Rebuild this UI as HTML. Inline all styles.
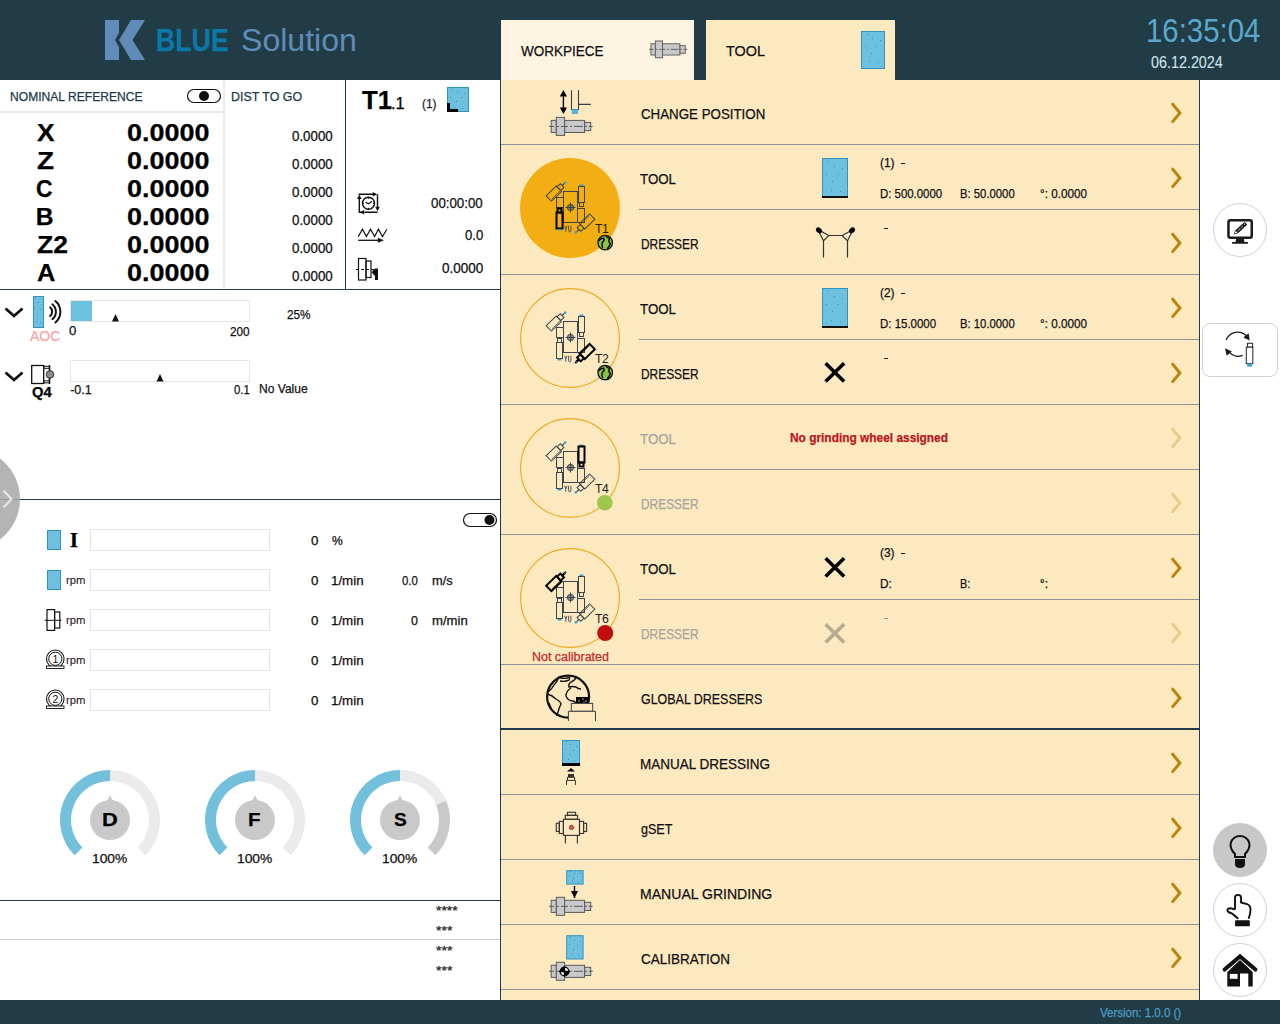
<!DOCTYPE html><html><head><meta charset="utf-8"><style>
html,body{margin:0;padding:0;width:1280px;height:1024px;overflow:hidden;background:#fff;}
body{position:relative;font-family:"Liberation Sans",sans-serif;}
.t{position:absolute;white-space:nowrap;line-height:normal;transform-origin:0 0;-webkit-text-stroke:0.25px currentColor;}
.b{position:absolute;}
.s{position:absolute;overflow:visible;}
</style></head><body>
<div class="b" style="left:0px;top:0px;width:1280px;height:80px;background:#213c47;"></div>
<svg class="s" style="left:100px;top:15px;" width="50" height="50" viewBox="0 0 50 50"><path fill="#5f8cb8" d="M5 5 H19 V18 L15 25 L19 32 V45 H5 Z"/><path fill="#5f8cb8" d="M31 5 H45 L32.5 25 L45 45 H31 L19 25 Z"/></svg>
<div class="t" style="left:156.26px;top:23.46px;font-size:30.43px;font-weight:700;color:#0a79a8;transform:scaleX(0.8779);">BLUE</div>
<div class="t" style="left:240.56px;top:22.93px;font-size:31.01px;font-weight:400;color:#5f8cb8;transform:scaleX(1.0349);-webkit-text-stroke:0;">Solution</div>
<div class="b" style="left:501px;top:20px;width:193px;height:60px;background:#fdf4e2;"></div>
<div class="b" style="left:706px;top:20px;width:189px;height:65px;background:#fde9c0;"></div>
<div class="t" style="left:520.93px;top:42.19px;font-size:14.93px;font-weight:400;color:#111;transform:scaleX(0.9057);">WORKPIECE</div>
<div class="t" style="left:725.71px;top:42.19px;font-size:14.93px;font-weight:400;color:#111;transform:scaleX(0.9664);">TOOL</div>
<svg class="s" style="left:640px;top:30px;" width="60" height="40" viewBox="0 0 60 40"><g transform="translate(9 11) scale(0.87 0.93)"><g stroke="#5a5a5a" stroke-width="1" fill="#c9c9c9"><rect x="2.2" y="3" width="5.1" height="12.1"/><rect x="15.6" y="3" width="20" height="12.1"/><rect x="35.6" y="5" width="6.1" height="8.2"/><rect x="7.3" y="0" width="8.3" height="18"/><path d="M0 9H5 M8 9H10 M12 9H19 M21 9H23 M25 9H34 M36 9H38 M40 9H43.7" fill="none" stroke-width="1"/></g></g></svg>
<svg class="s" style="left:850px;top:25px;" width="40" height="50" viewBox="0 0 40 50"><rect x="11.5" y="6.5" width="23" height="37" fill="#6ec1de" stroke="#2f95c0" stroke-width="1"/><rect x="17" y="9" width="1" height="1" fill="#2f8fbd"/><rect x="22" y="13" width="1" height="1" fill="#2f8fbd"/><rect x="30" y="15" width="1" height="1" fill="#2f8fbd"/><rect x="15" y="21" width="1" height="1" fill="#2f8fbd"/><rect x="26" y="21" width="1" height="1" fill="#2f8fbd"/><rect x="21" y="28" width="1" height="1" fill="#2f8fbd"/><rect x="19" y="36" width="1" height="1" fill="#2f8fbd"/><rect x="28" y="37" width="1" height="1" fill="#2f8fbd"/></svg>
<div class="t" style="left:1146.40px;top:12.62px;font-size:32.46px;font-weight:400;color:#5aa9cc;transform:scaleX(0.9050);-webkit-text-stroke:0;">16:35:04</div>
<div class="t" style="left:1151.43px;top:53.57px;font-size:15.94px;font-weight:400;color:#d0e2ea;transform:scaleX(0.8999);-webkit-text-stroke:0.1px;">06.12.2024</div>
<div class="b" style="left:0px;top:1000px;width:1280px;height:24px;background:#213c47;"></div>
<div class="t" style="left:1099.74px;top:1005.01px;font-size:12.97px;font-weight:400;color:#4d9ec4;transform:scaleX(0.8868);">Version: 1.0.0 ()</div>
<div class="b" style="left:500px;top:80px;width:1px;height:920px;background:#1f3a48;"></div>
<div class="b" style="left:0px;top:111px;width:223px;height:2px;background:#e8e8e8;"></div>
<div class="b" style="left:223px;top:80px;width:2px;height:209px;background:#ececec;"></div>
<div class="b" style="left:345px;top:80px;width:1px;height:209px;background:#1f3a48;"></div>
<div class="b" style="left:0px;top:289px;width:500px;height:1px;background:#1f3a48;"></div>
<div class="b" style="left:0px;top:499px;width:500px;height:1px;background:#1f3a48;"></div>
<div class="b" style="left:0px;top:900px;width:500px;height:1px;background:#1f3a48;"></div>
<div class="b" style="left:0px;top:939px;width:500px;height:1px;background:#cfcfcf;"></div>
<div class="t" style="left:9.83px;top:89.40px;font-size:13.04px;font-weight:400;color:#1c3949;transform:scaleX(0.9275);">NOMINAL REFERENCE</div>
<div class="t" style="left:230.51px;top:89.52px;font-size:12.46px;font-weight:400;color:#1c3949;transform:scaleX(0.9966);">DIST TO GO</div>
<svg class="s" style="left:186px;top:88px;" width="36" height="16" viewBox="0 0 36 16"><rect x="1.5" y="1.5" width="33" height="13" rx="6.5" fill="#fff" stroke="#111" stroke-width="1.2"/><circle cx="18" cy="8" r="5" fill="#111"/></svg>
<div class="t" style="left:37.14px;top:119.30px;font-size:24.64px;font-weight:700;color:#000;transform:scaleX(1.0698);">X</div>
<div class="t" style="left:126.92px;top:119.30px;font-size:24.64px;font-weight:700;color:#000;transform:scaleX(1.0951);">0.0000</div>
<div class="t" style="left:292.17px;top:129.34px;font-size:13.77px;font-weight:400;color:#111;transform:scaleX(0.9660);">0.0000</div>
<div class="t" style="left:36.56px;top:147.30px;font-size:24.64px;font-weight:700;color:#000;transform:scaleX(1.1335);">Z</div>
<div class="t" style="left:126.92px;top:147.30px;font-size:24.64px;font-weight:700;color:#000;transform:scaleX(1.0951);">0.0000</div>
<div class="t" style="left:292.17px;top:157.34px;font-size:13.77px;font-weight:400;color:#111;transform:scaleX(0.9660);">0.0000</div>
<div class="t" style="left:36.48px;top:175.30px;font-size:24.64px;font-weight:700;color:#000;transform:scaleX(0.9295);">C</div>
<div class="t" style="left:126.92px;top:175.30px;font-size:24.64px;font-weight:700;color:#000;transform:scaleX(1.0951);">0.0000</div>
<div class="t" style="left:292.17px;top:185.34px;font-size:13.77px;font-weight:400;color:#111;transform:scaleX(0.9660);">0.0000</div>
<div class="t" style="left:35.80px;top:203.30px;font-size:24.64px;font-weight:700;color:#000;">B</div>
<div class="t" style="left:126.92px;top:203.30px;font-size:24.64px;font-weight:700;color:#000;transform:scaleX(1.0951);">0.0000</div>
<div class="t" style="left:292.17px;top:213.34px;font-size:13.77px;font-weight:400;color:#111;transform:scaleX(0.9660);">0.0000</div>
<div class="t" style="left:36.61px;top:231.30px;font-size:24.64px;font-weight:700;color:#000;transform:scaleX(1.0749);">Z2</div>
<div class="t" style="left:126.92px;top:231.30px;font-size:24.64px;font-weight:700;color:#000;transform:scaleX(1.0951);">0.0000</div>
<div class="t" style="left:292.17px;top:241.34px;font-size:13.77px;font-weight:400;color:#111;transform:scaleX(0.9660);">0.0000</div>
<div class="t" style="left:36.77px;top:259.30px;font-size:24.64px;font-weight:700;color:#000;transform:scaleX(1.0299);">A</div>
<div class="t" style="left:126.92px;top:259.30px;font-size:24.64px;font-weight:700;color:#000;transform:scaleX(1.0951);">0.0000</div>
<div class="t" style="left:292.17px;top:269.34px;font-size:13.77px;font-weight:400;color:#111;transform:scaleX(0.9660);">0.0000</div>
<div class="t" style="left:361.74px;top:85.26px;font-size:26.23px;font-weight:700;color:#000;transform:scaleX(0.9783);">T1</div>
<div class="t" style="left:391.02px;top:94.57px;font-size:15.94px;font-weight:400;color:#000;transform:scaleX(1.0305);">.1</div>
<div class="t" style="left:421.79px;top:97.19px;font-size:12.50px;font-weight:400;color:#222;transform:scaleX(0.9527);">(1)</div>
<svg class="s" style="left:440px;top:80px;" width="40" height="40" viewBox="0 0 40 40"><rect x="7.5" y="7.5" width="21" height="24" fill="#6ec1de" stroke="#2f95c0" stroke-width="1"/><rect x="12" y="9" width="1" height="1" fill="#2f8fbd"/><rect x="17" y="12" width="1" height="1" fill="#2f8fbd"/><rect x="24" y="13" width="1" height="1" fill="#2f8fbd"/><rect x="10" y="17" width="1" height="1" fill="#2f8fbd"/><rect x="21" y="17" width="1" height="1" fill="#2f8fbd"/><rect x="16" y="21" width="1" height="1" fill="#2f8fbd"/><rect x="14" y="27" width="1" height="1" fill="#2f8fbd"/><rect x="22" y="28" width="1" height="1" fill="#2f8fbd"/><path d="M7 23 H10 V29 H18 V32 H7Z" fill="#000"/></svg>
<svg class="s" style="left:350px;top:185px;" width="40" height="35" viewBox="0 0 40 35"><g fill="none" stroke="#111" stroke-width="1.4">
<path d="M9.3 14 V27.3 H14 M23 9.2 H9.3 V10 M27.5 9.2 V22.5 M27.5 27.3 H14.5"/>
<circle cx="18.5" cy="18.3" r="6"/><path d="M15.6 17.2 L18.5 18.8 L22 16.3" stroke-width="1.2"/>
<path d="M18.5 12.3 V13.8 M18.5 22.8 V24.3 M12.5 18.3 H14 M23 18.3 H24.5" stroke-width="1"/></g>
<path d="M27.2 9.2 L22.8 6.9 V11.5Z M27.5 26.2 L25.2 21.8 H29.8Z M9.8 27.3 L14.2 25 V29.6Z M9.3 9.6 L7 14 H11.6Z" fill="#111"/></svg>
<div class="t" style="left:431.47px;top:194.92px;font-size:14.35px;font-weight:400;color:#111;transform:scaleX(0.9262);">00:00:00</div>
<svg class="s" style="left:350px;top:222px;" width="45" height="25" viewBox="0 0 45 25"><path d="M8.2 14.6 L12.5 7.3 L16.4 14.6 L20.5 7.3 L24.6 14.6 L28.4 7.3 L32.5 14.6 L36.9 7.3" fill="none" stroke="#111" stroke-width="1.2"/><path d="M8.2 18.3 H29" stroke="#111" stroke-width="1.3"/><path d="M33.9 18.3 L27.8 15.8 V20.8Z" fill="#111"/></svg>
<div class="t" style="left:464.98px;top:228.04px;font-size:13.77px;font-weight:400;color:#111;transform:scaleX(0.9500);">0.0</div>
<svg class="s" style="left:350px;top:255px;" width="35" height="30" viewBox="0 0 35 30"><rect x="8.5" y="3.5" width="7.5" height="21.5" fill="none" stroke="#111" stroke-width="1.2"/><rect x="16" y="6" width="5" height="16.5" fill="none" stroke="#111" stroke-width="1.2"/><path d="M6 14.5 H26" stroke="#111" stroke-width="1" stroke-dasharray="3 2"/><path d="M21.6 17.3 L25 13.6 V13.4 H28 V25 H25 V21Z" fill="#111"/></svg>
<div class="t" style="left:441.96px;top:261.04px;font-size:13.77px;font-weight:400;color:#111;transform:scaleX(0.9782);">0.0000</div>
<svg class="s" style="left:0px;top:300px;" width="30" height="30" viewBox="0 0 30 30"><path d="M5.5 8.5 L14 16 L22.5 8.5" fill="none" stroke="#111" stroke-width="2.8"/></svg>
<svg class="s" style="left:30px;top:294px;" width="35" height="36" viewBox="0 0 35 36"><rect x="3.5" y="2.5" width="10" height="31" fill="#6ec1de" stroke="#2f95c0" stroke-width="1"/><rect x="5" y="4" width="1" height="1" fill="#2f8fbd"/><rect x="8" y="8" width="1" height="1" fill="#2f8fbd"/><rect x="11" y="10" width="1" height="1" fill="#2f8fbd"/><rect x="4" y="14" width="1" height="1" fill="#2f8fbd"/><rect x="10" y="15" width="1" height="1" fill="#2f8fbd"/><rect x="7" y="20" width="1" height="1" fill="#2f8fbd"/><rect x="6" y="27" width="1" height="1" fill="#2f8fbd"/><rect x="10" y="28" width="1" height="1" fill="#2f8fbd"/><g fill="none" stroke="#111" stroke-width="2" stroke-linecap="round"><path d="M20.1 13.3 A5.8 5.8 0 0 1 20.1 22.1"/><path d="M22.5 10.4 A9.5 9.5 0 0 1 22.5 25"/><path d="M25.4 7 A14 14 0 0 1 25.4 28.4"/></g></svg>
<div class="t" style="left:30.30px;top:328.35px;font-size:14.64px;font-weight:400;color:#f4a2a2;transform:scaleX(0.9526);">AOC</div>
<div class="b" style="left:70px;top:300px;width:180px;height:22px;background:#fff;box-sizing:border-box;border:1px solid #e6e6e6;"></div>
<div class="b" style="left:71px;top:301px;width:20.5px;height:20px;background:#6ec1de;"></div>
<svg class="s" style="left:110px;top:312px;" width="12" height="10" viewBox="0 0 12 10"><path d="M5.5 2 L9 9.5 H2Z" fill="#111"/></svg>
<div class="t" style="left:69.47px;top:323.94px;font-size:11.88px;font-weight:400;color:#111;transform:scaleX(1.1044);">0</div>
<div class="t" style="left:230.21px;top:323.76px;font-size:12.75px;font-weight:400;color:#111;transform:scaleX(0.9230);">200</div>
<div class="t" style="left:286.81px;top:307.23px;font-size:12.90px;font-weight:400;color:#111;transform:scaleX(0.9150);">25%</div>
<svg class="s" style="left:0px;top:364px;" width="30" height="30" viewBox="0 0 30 30"><path d="M5.5 8.5 L14 16 L22.5 8.5" fill="none" stroke="#111" stroke-width="2.8"/></svg>
<svg class="s" style="left:28px;top:362px;" width="30" height="26" viewBox="0 0 30 26"><rect x="3.7" y="3.5" width="12" height="18" fill="#fff" stroke="#111" stroke-width="1.3"/><rect x="15.7" y="4.3" width="5.8" height="2" fill="none" stroke="#111" stroke-width="1"/><rect x="15.7" y="18.8" width="5.8" height="2" fill="none" stroke="#111" stroke-width="1"/><path d="M21.5 3 V22" stroke="#111" stroke-width="1.6"/><circle cx="22" cy="12.5" r="3.8" fill="#8c8c8c" stroke="#111" stroke-width="0.8"/></svg>
<div class="t" style="left:32.01px;top:384.74px;font-size:13.77px;font-weight:700;color:#000;transform:scaleX(1.0698);">Q4</div>
<div class="b" style="left:70px;top:360px;width:180px;height:22px;background:#fff;box-sizing:border-box;border:1px solid #e6e6e6;"></div>
<svg class="s" style="left:154px;top:372px;" width="12" height="10" viewBox="0 0 12 10"><path d="M6 2 L9.5 9.5 H2.5Z" fill="#111"/></svg>
<div class="t" style="left:70.14px;top:383.09px;font-size:12.50px;font-weight:400;color:#111;">-0.1</div>
<div class="t" style="left:234.15px;top:382.07px;font-size:13.62px;font-weight:400;color:#111;transform:scaleX(0.8325);">0.1</div>
<div class="t" style="left:259.04px;top:380.63px;font-size:12.90px;font-weight:400;color:#111;transform:scaleX(0.9347);">No Value</div>
<div class="b" style="left:-82px;top:448px;width:102px;height:102px;border-radius:50%;background:rgba(170,170,170,0.88);"></div>
<svg class="s" style="left:0px;top:488px;" width="16" height="24" viewBox="0 0 16 24"><path d="M3.5 2.5 L11.5 11 L3.5 19.5" fill="none" stroke="#e6e6e6" stroke-width="2.2"/></svg>
<svg class="s" style="left:460px;top:510px;" width="40" height="20" viewBox="0 0 40 20"><rect x="3.5" y="3.5" width="33" height="13" rx="6.5" fill="#fff" stroke="#111" stroke-width="1.2"/><circle cx="29.5" cy="10" r="5" fill="#111"/></svg>
<div class="b" style="left:90px;top:529px;width:180px;height:22px;background:#fff;box-sizing:border-box;border:1px solid #e4e4e4;"></div>
<div class="t" style="left:311.27px;top:534.04px;font-size:11.88px;font-weight:400;color:#111;transform:scaleX(1.1220);">0</div>
<div class="b" style="left:90px;top:569px;width:180px;height:22px;background:#fff;box-sizing:border-box;border:1px solid #e4e4e4;"></div>
<div class="t" style="left:311.27px;top:574.04px;font-size:11.88px;font-weight:400;color:#111;transform:scaleX(1.1220);">0</div>
<div class="b" style="left:90px;top:609px;width:180px;height:22px;background:#fff;box-sizing:border-box;border:1px solid #e4e4e4;"></div>
<div class="t" style="left:311.27px;top:614.04px;font-size:11.88px;font-weight:400;color:#111;transform:scaleX(1.1220);">0</div>
<div class="b" style="left:90px;top:649px;width:180px;height:22px;background:#fff;box-sizing:border-box;border:1px solid #e4e4e4;"></div>
<div class="t" style="left:311.27px;top:654.04px;font-size:11.88px;font-weight:400;color:#111;transform:scaleX(1.1220);">0</div>
<div class="b" style="left:90px;top:689px;width:180px;height:22px;background:#fff;box-sizing:border-box;border:1px solid #e4e4e4;"></div>
<div class="t" style="left:311.27px;top:694.04px;font-size:11.88px;font-weight:400;color:#111;transform:scaleX(1.1220);">0</div>
<svg class="s" style="left:40px;top:525px;" width="25" height="30" viewBox="0 0 25 30"><rect x="7.5" y="5.5" width="13" height="19" fill="#6ec1de" stroke="#2f95c0" stroke-width="1"/></svg>
<svg class="s" style="left:40px;top:565px;" width="25" height="30" viewBox="0 0 25 30"><rect x="7.5" y="5.5" width="13" height="19" fill="#6ec1de" stroke="#2f95c0" stroke-width="1"/></svg>
<div class="t" style="left:69.80px;top:528.44px;font-size:21.50px;font-weight:700;color:#000;font-family:'Liberation Serif',serif;">I</div>
<div class="t" style="left:66.17px;top:573.84px;font-size:11.00px;font-weight:400;color:#222;transform:scaleX(1.0259);-webkit-text-stroke:0.1px;">rpm</div>
<div class="t" style="left:66.17px;top:613.84px;font-size:11.00px;font-weight:400;color:#222;transform:scaleX(1.0259);-webkit-text-stroke:0.1px;">rpm</div>
<div class="t" style="left:66.17px;top:653.84px;font-size:11.00px;font-weight:400;color:#222;transform:scaleX(1.0259);-webkit-text-stroke:0.1px;">rpm</div>
<div class="t" style="left:66.17px;top:693.84px;font-size:11.00px;font-weight:400;color:#222;transform:scaleX(1.0259);-webkit-text-stroke:0.1px;">rpm</div>
<svg class="s" style="left:40px;top:605px;" width="25" height="30" viewBox="0 0 25 30"><rect x="7" y="4.6" width="7.6" height="20.8" fill="none" stroke="#111" stroke-width="1.2"/><rect x="14.6" y="7" width="5.2" height="16" fill="none" stroke="#111" stroke-width="1.2"/><path d="M4.7 15.3 H21.5" stroke="#111" stroke-width="1"/></svg>
<svg class="s" style="left:40px;top:645px;" width="26" height="28" viewBox="0 0 26 28"><circle cx="15.3" cy="13.8" r="8.8" fill="none" stroke="#111" stroke-width="1.1"/><circle cx="15.3" cy="13.8" r="6.6" fill="none" stroke="#111" stroke-width="1"/><rect x="6.5" y="21" width="17.5" height="2.5" fill="#fff" stroke="#111" stroke-width="0.9"/><text x="15.3" y="17.6" font-size="10.5" text-anchor="middle" font-family="Liberation Sans" fill="#111">1</text></svg>
<svg class="s" style="left:40px;top:685px;" width="26" height="28" viewBox="0 0 26 28"><circle cx="15.3" cy="13.8" r="8.8" fill="none" stroke="#111" stroke-width="1.1"/><circle cx="15.3" cy="13.8" r="6.6" fill="none" stroke="#111" stroke-width="1"/><rect x="6.5" y="21" width="17.5" height="2.5" fill="#fff" stroke="#111" stroke-width="0.9"/><text x="15.3" y="17.6" font-size="10.5" text-anchor="middle" font-family="Liberation Sans" fill="#111">2</text></svg>
<div class="t" style="left:331.58px;top:533.94px;font-size:11.88px;font-weight:400;color:#111;transform:scaleX(1.0159);">%</div>
<div class="t" style="left:331.00px;top:573.75px;font-size:12.32px;font-weight:400;color:#111;transform:scaleX(1.0812);">1/min</div>
<div class="t" style="left:331.00px;top:613.75px;font-size:12.32px;font-weight:400;color:#111;transform:scaleX(1.0812);">1/min</div>
<div class="t" style="left:331.00px;top:653.75px;font-size:12.32px;font-weight:400;color:#111;transform:scaleX(1.0812);">1/min</div>
<div class="t" style="left:331.00px;top:693.75px;font-size:12.32px;font-weight:400;color:#111;transform:scaleX(1.0812);">1/min</div>
<div class="t" style="left:402.04px;top:573.75px;font-size:12.32px;font-weight:400;color:#111;transform:scaleX(0.9260);">0.0</div>
<div class="t" style="left:431.66px;top:573.59px;font-size:12.50px;font-weight:400;color:#111;transform:scaleX(1.0278);">m/s</div>
<div class="t" style="left:411.00px;top:613.85px;font-size:12.32px;font-weight:400;color:#111;transform:scaleX(1.0147);">0</div>
<div class="t" style="left:431.65px;top:613.69px;font-size:12.50px;font-weight:400;color:#111;transform:scaleX(1.0502);">m/min</div>
<svg class="s" style="left:60px;top:770px;" width="100" height="100" viewBox="0 0 100 100"><path d="M18.53 81.47 A44.5 44.5 0 0 1 50.00 5.50" fill="none" stroke="#72c0dc" stroke-width="11"/><path d="M50.00 5.50 A44.5 44.5 0 0 1 81.47 81.47" fill="none" stroke="#ebebeb" stroke-width="11"/><circle cx="50" cy="50" r="20" fill="#c9c9c9"/><path d="M45 32 Q49 29 50 25 Q51 29 55 32Z" fill="#c9c9c9"/></svg>
<div class="t" style="left:101.88px;top:809.36px;font-size:19.28px;font-weight:700;color:#000;transform:scaleX(1.1304);">D</div>
<div class="t" style="left:91.97px;top:850.66px;font-size:13.19px;font-weight:400;color:#111;transform:scaleX(1.0461);">100%</div>
<svg class="s" style="left:205px;top:770px;" width="100" height="100" viewBox="0 0 100 100"><path d="M18.53 81.47 A44.5 44.5 0 0 1 50.00 5.50" fill="none" stroke="#72c0dc" stroke-width="11"/><path d="M50.00 5.50 A44.5 44.5 0 0 1 81.47 81.47" fill="none" stroke="#ebebeb" stroke-width="11"/><circle cx="50" cy="50" r="20" fill="#c9c9c9"/><path d="M45 32 Q49 29 50 25 Q51 29 55 32Z" fill="#c9c9c9"/></svg>
<div class="t" style="left:248.41px;top:809.36px;font-size:19.28px;font-weight:700;color:#000;transform:scaleX(1.0681);">F</div>
<div class="t" style="left:236.97px;top:850.66px;font-size:13.19px;font-weight:400;color:#111;transform:scaleX(1.0461);">100%</div>
<svg class="s" style="left:350px;top:770px;" width="100" height="100" viewBox="0 0 100 100"><path d="M18.53 81.47 A44.5 44.5 0 0 1 50.00 5.50" fill="none" stroke="#72c0dc" stroke-width="11"/><path d="M50.00 5.50 A44.5 44.5 0 0 1 91.11 32.97" fill="none" stroke="#ebebeb" stroke-width="11"/><path d="M91.11 32.97 A44.5 44.5 0 0 1 81.47 81.47" fill="none" stroke="#c9c9c9" stroke-width="11"/><circle cx="50" cy="50" r="20" fill="#c9c9c9"/><path d="M45 32 Q49 29 50 25 Q51 29 55 32Z" fill="#c9c9c9"/></svg>
<div class="t" style="left:393.68px;top:809.36px;font-size:19.28px;font-weight:700;color:#000;transform:scaleX(0.9944);">S</div>
<div class="t" style="left:381.97px;top:850.66px;font-size:13.19px;font-weight:400;color:#111;transform:scaleX(1.0461);">100%</div>
<div class="t" style="left:435.99px;top:903.24px;font-size:13.00px;font-weight:400;color:#222;transform:scaleX(1.0744);">****</div>
<div class="t" style="left:435.99px;top:923.24px;font-size:13.00px;font-weight:400;color:#222;transform:scaleX(1.0796);">***</div>
<div class="t" style="left:435.99px;top:943.24px;font-size:13.00px;font-weight:400;color:#222;transform:scaleX(1.0796);">***</div>
<div class="t" style="left:435.99px;top:963.24px;font-size:13.00px;font-weight:400;color:#222;transform:scaleX(1.0796);">***</div>
<div class="b" style="left:501px;top:80px;width:698px;height:920px;background:#fde9c0;"></div>
<div class="b" style="left:1199px;top:80px;width:1px;height:920px;background:#1f3a48;"></div>
<div class="b" style="left:501px;top:144px;width:698px;height:1px;background:#8e9597;"></div>
<div class="b" style="left:501px;top:274px;width:698px;height:1px;background:#8e9597;"></div>
<div class="b" style="left:501px;top:404px;width:698px;height:1px;background:#8e9597;"></div>
<div class="b" style="left:501px;top:534px;width:698px;height:1px;background:#8e9597;"></div>
<div class="b" style="left:501px;top:664px;width:698px;height:1px;background:#8e9597;"></div>
<div class="b" style="left:501px;top:794px;width:698px;height:1px;background:#8e9597;"></div>
<div class="b" style="left:501px;top:859px;width:698px;height:1px;background:#8e9597;"></div>
<div class="b" style="left:501px;top:924px;width:698px;height:1px;background:#8e9597;"></div>
<div class="b" style="left:501px;top:989px;width:698px;height:1px;background:#8e9597;"></div>
<div class="b" style="left:639px;top:209px;width:560px;height:1px;background:#8e9597;"></div>
<div class="b" style="left:639px;top:339px;width:560px;height:1px;background:#8e9597;"></div>
<div class="b" style="left:639px;top:469px;width:560px;height:1px;background:#8e9597;"></div>
<div class="b" style="left:639px;top:599px;width:560px;height:1px;background:#8e9597;"></div>
<div class="b" style="left:501px;top:728px;width:698px;height:2px;background:#1f3a48;"></div>
<svg class="s" style="left:1165px;top:100px;" width="20" height="26" viewBox="0 0 20 26"><path d="M7.7 4.2 L14.9 13 L7.7 21.6" fill="none" stroke="#b8860b" stroke-width="3" stroke-linecap="round" stroke-linejoin="miter"/></svg>
<svg class="s" style="left:1165px;top:165px;" width="20" height="26" viewBox="0 0 20 26"><path d="M7.7 4.2 L14.9 13 L7.7 21.6" fill="none" stroke="#b8860b" stroke-width="3" stroke-linecap="round" stroke-linejoin="miter"/></svg>
<svg class="s" style="left:1165px;top:230px;" width="20" height="26" viewBox="0 0 20 26"><path d="M7.7 4.2 L14.9 13 L7.7 21.6" fill="none" stroke="#b8860b" stroke-width="3" stroke-linecap="round" stroke-linejoin="miter"/></svg>
<svg class="s" style="left:1165px;top:295px;" width="20" height="26" viewBox="0 0 20 26"><path d="M7.7 4.2 L14.9 13 L7.7 21.6" fill="none" stroke="#b8860b" stroke-width="3" stroke-linecap="round" stroke-linejoin="miter"/></svg>
<svg class="s" style="left:1165px;top:360px;" width="20" height="26" viewBox="0 0 20 26"><path d="M7.7 4.2 L14.9 13 L7.7 21.6" fill="none" stroke="#b8860b" stroke-width="3" stroke-linecap="round" stroke-linejoin="miter"/></svg>
<svg class="s" style="left:1165px;top:750px;" width="20" height="26" viewBox="0 0 20 26"><path d="M7.7 4.2 L14.9 13 L7.7 21.6" fill="none" stroke="#b8860b" stroke-width="3" stroke-linecap="round" stroke-linejoin="miter"/></svg>
<svg class="s" style="left:1165px;top:815px;" width="20" height="26" viewBox="0 0 20 26"><path d="M7.7 4.2 L14.9 13 L7.7 21.6" fill="none" stroke="#b8860b" stroke-width="3" stroke-linecap="round" stroke-linejoin="miter"/></svg>
<svg class="s" style="left:1165px;top:880px;" width="20" height="26" viewBox="0 0 20 26"><path d="M7.7 4.2 L14.9 13 L7.7 21.6" fill="none" stroke="#b8860b" stroke-width="3" stroke-linecap="round" stroke-linejoin="miter"/></svg>
<svg class="s" style="left:1165px;top:945px;" width="20" height="26" viewBox="0 0 20 26"><path d="M7.7 4.2 L14.9 13 L7.7 21.6" fill="none" stroke="#b8860b" stroke-width="3" stroke-linecap="round" stroke-linejoin="miter"/></svg>
<svg class="s" style="left:1165px;top:685px;" width="20" height="26" viewBox="0 0 20 26"><path d="M7.7 4.2 L14.9 13 L7.7 21.6" fill="none" stroke="#b8860b" stroke-width="3" stroke-linecap="round" stroke-linejoin="miter"/></svg>
<svg class="s" style="left:1165px;top:555px;" width="20" height="26" viewBox="0 0 20 26"><path d="M7.7 4.2 L14.9 13 L7.7 21.6" fill="none" stroke="#b8860b" stroke-width="3" stroke-linecap="round" stroke-linejoin="miter"/></svg>
<svg class="s" style="left:1165px;top:425px;" width="20" height="26" viewBox="0 0 20 26"><path d="M7.7 4.2 L14.9 13 L7.7 21.6" fill="none" stroke="#e6cc88" stroke-width="3" stroke-linecap="round" stroke-linejoin="miter"/></svg>
<svg class="s" style="left:1165px;top:490px;" width="20" height="26" viewBox="0 0 20 26"><path d="M7.7 4.2 L14.9 13 L7.7 21.6" fill="none" stroke="#e6cc88" stroke-width="3" stroke-linecap="round" stroke-linejoin="miter"/></svg>
<svg class="s" style="left:1165px;top:620px;" width="20" height="26" viewBox="0 0 20 26"><path d="M7.7 4.2 L14.9 13 L7.7 21.6" fill="none" stroke="#e6cc88" stroke-width="3" stroke-linecap="round" stroke-linejoin="miter"/></svg>
<div class="t" style="left:640.63px;top:106.05px;font-size:14.20px;font-weight:400;color:#111;transform:scaleX(0.9383);">CHANGE POSITION</div>
<div class="t" style="left:640.03px;top:170.85px;font-size:14.20px;font-weight:400;color:#111;transform:scaleX(0.9388);">TOOL</div>
<div class="t" style="left:640.75px;top:236.05px;font-size:14.20px;font-weight:400;color:#111;transform:scaleX(0.8401);">DRESSER</div>
<div class="t" style="left:640.03px;top:300.85px;font-size:14.20px;font-weight:400;color:#111;transform:scaleX(0.9388);">TOOL</div>
<div class="t" style="left:640.75px;top:366.05px;font-size:14.20px;font-weight:400;color:#111;transform:scaleX(0.8401);">DRESSER</div>
<div class="t" style="left:640.03px;top:430.85px;font-size:14.20px;font-weight:400;color:#a7a59f;transform:scaleX(0.9388);">TOOL</div>
<div class="t" style="left:640.75px;top:496.05px;font-size:14.20px;font-weight:400;color:#a7a59f;transform:scaleX(0.8401);">DRESSER</div>
<div class="t" style="left:640.03px;top:560.85px;font-size:14.20px;font-weight:400;color:#111;transform:scaleX(0.9388);">TOOL</div>
<div class="t" style="left:640.75px;top:626.05px;font-size:14.20px;font-weight:400;color:#a7a59f;transform:scaleX(0.8401);">DRESSER</div>
<div class="t" style="left:640.68px;top:690.65px;font-size:14.20px;font-weight:400;color:#111;transform:scaleX(0.8775);">GLOBAL DRESSERS</div>
<div class="t" style="left:640.22px;top:755.65px;font-size:14.20px;font-weight:400;color:#111;transform:scaleX(0.9521);">MANUAL DRESSING</div>
<div class="t" style="left:640.80px;top:820.65px;font-size:14.20px;font-weight:400;color:#111;transform:scaleX(0.8859);">gSET</div>
<div class="t" style="left:640.17px;top:885.65px;font-size:14.20px;font-weight:400;color:#111;transform:scaleX(0.9905);">MANUAL GRINDING</div>
<div class="t" style="left:640.63px;top:950.65px;font-size:14.20px;font-weight:400;color:#111;transform:scaleX(0.9504);">CALIBRATION</div>
<svg class="s" style="left:815px;top:150px;" width="40" height="55" viewBox="0 0 40 55"><rect x="7.5" y="8.5" width="25" height="39" fill="#6ec1de" stroke="#2f95c0" stroke-width="1"/><rect x="13" y="11" width="1" height="1" fill="#2f8fbd"/><rect x="19" y="16" width="1" height="1" fill="#2f8fbd"/><rect x="27" y="18" width="1" height="1" fill="#2f8fbd"/><rect x="11" y="24" width="1" height="1" fill="#2f8fbd"/><rect x="23" y="24" width="1" height="1" fill="#2f8fbd"/><rect x="17" y="31" width="1" height="1" fill="#2f8fbd"/><rect x="16" y="40" width="1" height="1" fill="#2f8fbd"/><rect x="25" y="41" width="1" height="1" fill="#2f8fbd"/><rect x="7" y="46" width="26" height="2" fill="#111"/></svg>
<div class="t" style="left:879.59px;top:155.69px;font-size:12.50px;font-weight:400;color:#111;transform:scaleX(0.9527);">(1)</div>
<div class="b" style="left:900.8px;top:163px;width:3.8px;height:1.2px;background:#111;"></div>
<div class="t" style="left:879.79px;top:186.65px;font-size:12.32px;font-weight:400;color:#111;transform:scaleX(0.9251);">D: 500.0000</div>
<div class="t" style="left:959.69px;top:186.65px;font-size:12.32px;font-weight:400;color:#111;transform:scaleX(0.9184);">B: 50.0000</div>
<div class="t" style="left:1039.90px;top:186.67px;font-size:12.30px;font-weight:400;color:#111;transform:scaleX(0.9520);">°: 0.0000</div>
<svg class="s" style="left:810px;top:222px;" width="50" height="40" viewBox="0 0 50 40"><g fill="none" stroke="#333" stroke-width="1.2"><path d="M13.5 35.5 V18.75 L18.75 13.5 H32.2 L37.5 18.75 V35.5"/><path d="M13.5 18.75 L7.8 7.4 L18.75 13.5"/><path d="M37.5 18.75 L43.2 7.4 L32.2 13.5"/></g><ellipse cx="9" cy="8.4" rx="3.3" ry="2.5" transform="rotate(40 9 8.4)" fill="#000"/><ellipse cx="42" cy="8.4" rx="3.3" ry="2.5" transform="rotate(-40 42 8.4)" fill="#000"/></svg>
<div class="b" style="left:883.8px;top:228px;width:4px;height:1.2px;background:#222;"></div>
<svg class="s" style="left:815px;top:280px;" width="40" height="55" viewBox="0 0 40 55"><rect x="7.5" y="8.5" width="25" height="39" fill="#6ec1de" stroke="#2f95c0" stroke-width="1"/><rect x="13" y="11" width="1" height="1" fill="#2f8fbd"/><rect x="19" y="16" width="1" height="1" fill="#2f8fbd"/><rect x="27" y="18" width="1" height="1" fill="#2f8fbd"/><rect x="11" y="24" width="1" height="1" fill="#2f8fbd"/><rect x="23" y="24" width="1" height="1" fill="#2f8fbd"/><rect x="17" y="31" width="1" height="1" fill="#2f8fbd"/><rect x="16" y="40" width="1" height="1" fill="#2f8fbd"/><rect x="25" y="41" width="1" height="1" fill="#2f8fbd"/><rect x="7" y="46" width="26" height="2" fill="#111"/></svg>
<div class="t" style="left:879.59px;top:285.69px;font-size:12.50px;font-weight:400;color:#111;transform:scaleX(0.9527);">(2)</div>
<div class="b" style="left:900.8px;top:293px;width:3.8px;height:1.2px;background:#111;"></div>
<div class="t" style="left:879.78px;top:316.65px;font-size:12.32px;font-weight:400;color:#111;transform:scaleX(0.9316);">D: 15.0000</div>
<div class="t" style="left:959.69px;top:316.65px;font-size:12.32px;font-weight:400;color:#111;transform:scaleX(0.9184);">B: 10.0000</div>
<div class="t" style="left:1039.90px;top:316.67px;font-size:12.30px;font-weight:400;color:#111;transform:scaleX(0.9520);">°: 0.0000</div>
<svg class="s" style="left:819px;top:357px;" width="30" height="30" viewBox="0 0 30 30"><path d="M6.6 6.2 L25.1 24.5 M25.1 6.2 L6.6 24.5" stroke="#000" stroke-width="3.6"/></svg>
<div class="b" style="left:883.8px;top:358px;width:4px;height:1.2px;background:#222;"></div>
<div class="t" style="left:789.73px;top:430.26px;font-size:12.75px;font-weight:700;color:#b8161d;transform:scaleX(0.9332);">No grinding wheel assigned</div>
<svg class="s" style="left:819px;top:552px;" width="30" height="30" viewBox="0 0 30 30"><path d="M6.6 6.2 L25.1 24.5 M25.1 6.2 L6.6 24.5" stroke="#000" stroke-width="3.6"/></svg>
<div class="t" style="left:879.59px;top:545.69px;font-size:12.50px;font-weight:400;color:#111;transform:scaleX(0.9527);">(3)</div>
<div class="b" style="left:900.8px;top:553px;width:3.8px;height:1.2px;background:#111;"></div>
<div class="t" style="left:879.75px;top:576.65px;font-size:12.32px;font-weight:400;color:#111;transform:scaleX(0.9643);">D:</div>
<div class="t" style="left:959.73px;top:576.65px;font-size:12.32px;font-weight:400;color:#111;transform:scaleX(0.8856);">B:</div>
<div class="t" style="left:1039.86px;top:576.67px;font-size:12.30px;font-weight:400;color:#111;">°:</div>
<svg class="s" style="left:819px;top:618px;" width="30" height="30" viewBox="0 0 30 30"><path d="M6.6 6.2 L25.1 24.5 M25.1 6.2 L6.6 24.5" stroke="#b5ab8f" stroke-width="3.6"/></svg>
<div class="b" style="left:883.8px;top:618px;width:4px;height:1px;background:#999;"></div>
<div class="t" style="left:531.50px;top:649.24px;font-size:13.00px;font-weight:400;color:#bd2a2e;transform:scaleX(0.9588);">Not calibrated</div>
<svg class="s" style="left:520px;top:155px;" width="100" height="100" viewBox="0 0 100 100"><g transform="translate(20 20)"><circle cx="30" cy="33" r="50" fill="#f2ae13"/><g fill="none" stroke="#3a4550" stroke-width="1"><rect x="23.5" y="16.5" width="14" height="31"/><rect x="16.5" y="22.5" width="7" height="10"/><rect x="37.5" y="33.5" width="7" height="14"/></g><circle cx="30.5" cy="32.5" r="3.2" fill="#4a5560" fill-opacity="0.6" stroke="#3a4550" stroke-width="0.9"/><path d="M25.5 32.5 H35.5 M30.5 27.5 V37.5" stroke="#3a4550" stroke-width="1"/><rect x="39.5" y="9.5" width="4" height="1.6" fill="#3aa3d3"/><rect x="38.5" y="11.5" width="6" height="16" fill="none" stroke="#3a4550" stroke-width="1"/><rect x="39.5" y="27.5" width="4" height="4" fill="none" stroke="#3a4550" stroke-width="1"/><rect x="17.5" y="33.5" width="4" height="4" fill="none" stroke="#000" stroke-width="2"/><rect x="16.5" y="37.5" width="6" height="16" fill="none" stroke="#000" stroke-width="2"/><rect x="17.5" y="53.9" width="4" height="1.6" fill="#3aa3d3"/><g transform="rotate(0 30.5 32.5)"><g transform="translate(8.8 23.4) rotate(-44)"><rect x="0" y="-3.8" width="14" height="7.6" fill="none" stroke="#3a4550" stroke-width="1"/><path d="M1.5 2.6 H13" stroke="#3a4550" stroke-width="0.7"/><rect x="14" y="-2.6" width="4.5" height="5.2" fill="none" stroke="#3a4550" stroke-width="1"/><rect x="18.5" y="-0.6" width="3.2" height="1.2" fill="#3a4550"/><rect x="21.5" y="-1.2" width="2.4" height="2.4" fill="#3aa3d3"/></g></g><g transform="rotate(180 30.5 32.5)"><g transform="translate(8.8 23.4) rotate(-44)"><rect x="0" y="-3.8" width="14" height="7.6" fill="none" stroke="#3a4550" stroke-width="1"/><path d="M1.5 2.6 H13" stroke="#3a4550" stroke-width="0.7"/><rect x="14" y="-2.6" width="4.5" height="5.2" fill="none" stroke="#3a4550" stroke-width="1"/><rect x="18.5" y="-0.6" width="3.2" height="1.2" fill="#3a4550"/><rect x="21.5" y="-1.2" width="2.4" height="2.4" fill="#3aa3d3"/></g></g><path d="M24.6 50.8 L25.8 53.9 L27 50.8 M25.8 53.9 V56.8 M28.6 50.8 V55.2 Q28.6 56.8 29.75 56.8 Q30.9 56.8 30.9 55.2 V50.8" fill="none" stroke="#3a4550" stroke-width="0.9"/><text x="55" y="57.8" font-size="12.2" letter-spacing="-0.4" font-family="Liberation Sans" fill="#222">T1</text><circle cx="65.2" cy="67.6" r="7.3" fill="#8bc34a" stroke="#111" stroke-width="1.3"/><path d="M58.5 66 Q61 62.5 63.8 63.3 Q64.8 65.8 62.3 67.3 Q61.2 69.8 62.8 72.8" fill="none" stroke="#111" stroke-width="1.5"/><path d="M66 60.8 Q67.2 63.2 69.6 63.4 Q67.8 66.4 70.4 68.6 Q69.4 71.6 67.2 73.8" fill="none" stroke="#111" stroke-width="1.5"/></g></svg>
<svg class="s" style="left:520px;top:285px;" width="100" height="100" viewBox="0 0 100 100"><g transform="translate(20 20)"><circle cx="30" cy="33" r="49.4" fill="none" stroke="#f0a920" stroke-width="1.15"/><g fill="none" stroke="#3a4550" stroke-width="1"><rect x="23.5" y="16.5" width="14" height="31"/><rect x="16.5" y="22.5" width="7" height="10"/><rect x="37.5" y="33.5" width="7" height="14"/></g><circle cx="30.5" cy="32.5" r="3.2" fill="#4a5560" fill-opacity="0.6" stroke="#3a4550" stroke-width="0.9"/><path d="M25.5 32.5 H35.5 M30.5 27.5 V37.5" stroke="#3a4550" stroke-width="1"/><rect x="39.5" y="9.5" width="4" height="1.6" fill="#3aa3d3"/><rect x="38.5" y="11.5" width="6" height="16" fill="none" stroke="#3a4550" stroke-width="1"/><rect x="39.5" y="27.5" width="4" height="4" fill="none" stroke="#3a4550" stroke-width="1"/><rect x="17.5" y="33.5" width="4" height="4" fill="none" stroke="#3a4550" stroke-width="1"/><rect x="16.5" y="37.5" width="6" height="16" fill="none" stroke="#3a4550" stroke-width="1"/><rect x="17.5" y="53.9" width="4" height="1.6" fill="#3aa3d3"/><g transform="rotate(0 30.5 32.5)"><g transform="translate(8.8 23.4) rotate(-44)"><rect x="0" y="-3.8" width="14" height="7.6" fill="none" stroke="#3a4550" stroke-width="1"/><path d="M1.5 2.6 H13" stroke="#3a4550" stroke-width="0.7"/><rect x="14" y="-2.6" width="4.5" height="5.2" fill="none" stroke="#3a4550" stroke-width="1"/><rect x="18.5" y="-0.6" width="3.2" height="1.2" fill="#3a4550"/><rect x="21.5" y="-1.2" width="2.4" height="2.4" fill="#3aa3d3"/></g></g><g transform="rotate(180 30.5 32.5)"><g transform="translate(8.8 23.4) rotate(-44)"><rect x="0" y="-3.8" width="14" height="7.6" fill="none" stroke="#000" stroke-width="2"/><path d="M1.5 2.6 H13" stroke="#000" stroke-width="0.7"/><rect x="14" y="-2.6" width="4.5" height="5.2" fill="none" stroke="#000" stroke-width="2"/><rect x="18.5" y="-1.2" width="3.2" height="2.4" fill="#000"/><rect x="21.5" y="-1.2" width="2.4" height="2.4" fill="#1a4a66"/></g></g><path d="M24.6 50.8 L25.8 53.9 L27 50.8 M25.8 53.9 V56.8 M28.6 50.8 V55.2 Q28.6 56.8 29.75 56.8 Q30.9 56.8 30.9 55.2 V50.8" fill="none" stroke="#3a4550" stroke-width="0.9"/><text x="55" y="57.8" font-size="12.2" letter-spacing="-0.4" font-family="Liberation Sans" fill="#222">T2</text><circle cx="65.2" cy="67.6" r="7.3" fill="#8bc34a" stroke="#111" stroke-width="1.3"/><path d="M58.5 66 Q61 62.5 63.8 63.3 Q64.8 65.8 62.3 67.3 Q61.2 69.8 62.8 72.8" fill="none" stroke="#111" stroke-width="1.5"/><path d="M66 60.8 Q67.2 63.2 69.6 63.4 Q67.8 66.4 70.4 68.6 Q69.4 71.6 67.2 73.8" fill="none" stroke="#111" stroke-width="1.5"/></g></svg>
<svg class="s" style="left:520px;top:415px;" width="100" height="100" viewBox="0 0 100 100"><g transform="translate(20 20)"><circle cx="30" cy="33" r="49.4" fill="none" stroke="#f0a920" stroke-width="1.15"/><g fill="none" stroke="#3a4550" stroke-width="1"><rect x="23.5" y="16.5" width="14" height="31"/><rect x="16.5" y="22.5" width="7" height="10"/><rect x="37.5" y="33.5" width="7" height="14"/></g><circle cx="30.5" cy="32.5" r="3.2" fill="#4a5560" fill-opacity="0.6" stroke="#3a4550" stroke-width="0.9"/><path d="M25.5 32.5 H35.5 M30.5 27.5 V37.5" stroke="#3a4550" stroke-width="1"/><rect x="39.5" y="9.5" width="4" height="1.6" fill="#3aa3d3"/><rect x="38.5" y="11.5" width="6" height="16" fill="none" stroke="#000" stroke-width="2"/><rect x="39.5" y="27.5" width="4" height="4" fill="none" stroke="#000" stroke-width="2"/><rect x="17.5" y="33.5" width="4" height="4" fill="none" stroke="#3a4550" stroke-width="1"/><rect x="16.5" y="37.5" width="6" height="16" fill="none" stroke="#3a4550" stroke-width="1"/><rect x="17.5" y="53.9" width="4" height="1.6" fill="#3aa3d3"/><g transform="rotate(0 30.5 32.5)"><g transform="translate(8.8 23.4) rotate(-44)"><rect x="0" y="-3.8" width="14" height="7.6" fill="none" stroke="#3a4550" stroke-width="1"/><path d="M1.5 2.6 H13" stroke="#3a4550" stroke-width="0.7"/><rect x="14" y="-2.6" width="4.5" height="5.2" fill="none" stroke="#3a4550" stroke-width="1"/><rect x="18.5" y="-0.6" width="3.2" height="1.2" fill="#3a4550"/><rect x="21.5" y="-1.2" width="2.4" height="2.4" fill="#3aa3d3"/></g></g><g transform="rotate(180 30.5 32.5)"><g transform="translate(8.8 23.4) rotate(-44)"><rect x="0" y="-3.8" width="14" height="7.6" fill="none" stroke="#3a4550" stroke-width="1"/><path d="M1.5 2.6 H13" stroke="#3a4550" stroke-width="0.7"/><rect x="14" y="-2.6" width="4.5" height="5.2" fill="none" stroke="#3a4550" stroke-width="1"/><rect x="18.5" y="-0.6" width="3.2" height="1.2" fill="#3a4550"/><rect x="21.5" y="-1.2" width="2.4" height="2.4" fill="#3aa3d3"/></g></g><path d="M24.6 50.8 L25.8 53.9 L27 50.8 M25.8 53.9 V56.8 M28.6 50.8 V55.2 Q28.6 56.8 29.75 56.8 Q30.9 56.8 30.9 55.2 V50.8" fill="none" stroke="#3a4550" stroke-width="0.9"/><text x="55" y="57.8" font-size="12.2" letter-spacing="-0.4" font-family="Liberation Sans" fill="#222">T4</text><circle cx="64.8" cy="67.8" r="7.8" fill="#9ec74b"/></g></svg>
<svg class="s" style="left:520px;top:545px;" width="100" height="100" viewBox="0 0 100 100"><g transform="translate(20 20)"><circle cx="30" cy="33" r="49.4" fill="none" stroke="#f0a920" stroke-width="1.15"/><g fill="none" stroke="#3a4550" stroke-width="1"><rect x="23.5" y="16.5" width="14" height="31"/><rect x="16.5" y="22.5" width="7" height="10"/><rect x="37.5" y="33.5" width="7" height="14"/></g><circle cx="30.5" cy="32.5" r="3.2" fill="#4a5560" fill-opacity="0.6" stroke="#3a4550" stroke-width="0.9"/><path d="M25.5 32.5 H35.5 M30.5 27.5 V37.5" stroke="#3a4550" stroke-width="1"/><rect x="39.5" y="9.5" width="4" height="1.6" fill="#3aa3d3"/><rect x="38.5" y="11.5" width="6" height="16" fill="none" stroke="#3a4550" stroke-width="1"/><rect x="39.5" y="27.5" width="4" height="4" fill="none" stroke="#3a4550" stroke-width="1"/><rect x="17.5" y="33.5" width="4" height="4" fill="none" stroke="#3a4550" stroke-width="1"/><rect x="16.5" y="37.5" width="6" height="16" fill="none" stroke="#3a4550" stroke-width="1"/><rect x="17.5" y="53.9" width="4" height="1.6" fill="#3aa3d3"/><g transform="rotate(0 30.5 32.5)"><g transform="translate(8.8 23.4) rotate(-44)"><rect x="0" y="-3.8" width="14" height="7.6" fill="none" stroke="#000" stroke-width="2"/><path d="M1.5 2.6 H13" stroke="#000" stroke-width="0.7"/><rect x="14" y="-2.6" width="4.5" height="5.2" fill="none" stroke="#000" stroke-width="2"/><rect x="18.5" y="-1.2" width="3.2" height="2.4" fill="#000"/><rect x="21.5" y="-1.2" width="2.4" height="2.4" fill="#1a4a66"/></g></g><g transform="rotate(180 30.5 32.5)"><g transform="translate(8.8 23.4) rotate(-44)"><rect x="0" y="-3.8" width="14" height="7.6" fill="none" stroke="#3a4550" stroke-width="1"/><path d="M1.5 2.6 H13" stroke="#3a4550" stroke-width="0.7"/><rect x="14" y="-2.6" width="4.5" height="5.2" fill="none" stroke="#3a4550" stroke-width="1"/><rect x="18.5" y="-0.6" width="3.2" height="1.2" fill="#3a4550"/><rect x="21.5" y="-1.2" width="2.4" height="2.4" fill="#3aa3d3"/></g></g><path d="M24.6 50.8 L25.8 53.9 L27 50.8 M25.8 53.9 V56.8 M28.6 50.8 V55.2 Q28.6 56.8 29.75 56.8 Q30.9 56.8 30.9 55.2 V50.8" fill="none" stroke="#3a4550" stroke-width="0.9"/><text x="55" y="57.8" font-size="12.2" letter-spacing="-0.4" font-family="Liberation Sans" fill="#222">T6</text><circle cx="65.2" cy="68" r="8" fill="#c00d0d"/></g></svg>
<svg class="s" style="left:540px;top:670px;" width="60" height="60" viewBox="0 0 60 60"><circle cx="28.1" cy="26.7" r="21" fill="none" stroke="#111" stroke-width="2.2"/>
<g fill="none" stroke="#111" stroke-width="1.4">
<path d="M18 7 Q22 9 27 8 Q31 6 29 10 Q25 12 20 11"/>
<path d="M8 22 Q12 19 14 15 Q17 12 18 9 M7 24 Q12 25 16 29 Q21 32 21 34 Q19 38 18 42 Q17 44 17 46"/>
<path d="M36 8 Q34 11 31 12 Q28 14 29 17 Q33 16 36 17 Q38 19 41 19 M31 18 Q26 21 26 26 Q28 31 33 31 Q35 31 36 34"/>
<path d="M9 33 Q11 38 12 41"/>
</g>
<rect x="36" y="27" width="12" height="6" fill="#000"/><circle cx="39" cy="31" r="0.7" fill="#fde9c0"/><circle cx="43" cy="29" r="0.7" fill="#fde9c0"/><circle cx="46" cy="31" r="0.7" fill="#fde9c0"/><circle cx="44" cy="32" r="0.6" fill="#fde9c0"/>
<rect x="31.3" y="33.4" width="21.4" height="7.9" fill="#fde9c0" stroke="#3a3f45" stroke-width="1"/>
<path d="M28.4 51 V41.3 H55.5 V51" fill="#fde9c0" stroke="#3a3f45" stroke-width="1"/></svg>
<svg class="s" style="left:555px;top:735px;" width="30" height="55" viewBox="0 0 30 55"><rect x="7.5" y="5.5" width="17" height="23" fill="#6ec1de" stroke="#2f95c0" stroke-width="1"/><rect x="11" y="6" width="1" height="1" fill="#2f8fbd"/><rect x="15" y="9" width="1" height="1" fill="#2f8fbd"/><rect x="21" y="11" width="1" height="1" fill="#2f8fbd"/><rect x="10" y="14" width="1" height="1" fill="#2f8fbd"/><rect x="18" y="15" width="1" height="1" fill="#2f8fbd"/><rect x="14" y="19" width="1" height="1" fill="#2f8fbd"/><rect x="13" y="24" width="1" height="1" fill="#2f8fbd"/><rect x="19" y="25" width="1" height="1" fill="#2f8fbd"/><rect x="7" y="28" width="18" height="3" fill="#000"/><path d="M16 33 L20 36.6 H12Z" fill="#000"/><rect x="13" y="39" width="6" height="3.5" fill="#333"/><path d="M12.5 45.4 V42.2 H19.6 V45.4 M11.5 50 V45.4 H20.4 V50" fill="none" stroke="#333" stroke-width="1"/></svg>
<svg class="s" style="left:550px;top:805px;" width="40" height="45" viewBox="0 0 40 45"><g fill="none" stroke="#333" stroke-width="1.1">
<rect x="13.4" y="14.3" width="16.1" height="16.1"/><rect x="15.3" y="10.3" width="12.2" height="4"/><rect x="17.4" y="7.3" width="8.2" height="3"/>
<rect x="9.3" y="16.4" width="4.1" height="12.1"/><rect x="6.3" y="18.3" width="3" height="8.2"/>
<rect x="29.5" y="16.4" width="4.1" height="12.1"/><rect x="33.6" y="18.3" width="3" height="8.2"/>
<path d="M15.4 30.4 V38.6 M27.4 30.4 V38.6"/></g><circle cx="21.5" cy="22.4" r="2.2" fill="#e84a4a" stroke="#333" stroke-width="0.6"/></svg>
<svg class="s" style="left:545px;top:865px;" width="50" height="55" viewBox="0 0 50 55"><rect x="21.7" y="5.7" width="16.4" height="13.4" fill="#6ec1de" stroke="#2f95c0" stroke-width="1"/><rect x="25" y="6" width="1" height="1" fill="#2f8fbd"/><rect x="29" y="8" width="1" height="1" fill="#2f8fbd"/><rect x="35" y="8" width="1" height="1" fill="#2f8fbd"/><rect x="24" y="10" width="1" height="1" fill="#2f8fbd"/><rect x="32" y="11" width="1" height="1" fill="#2f8fbd"/><rect x="28" y="13" width="1" height="1" fill="#2f8fbd"/><rect x="27" y="16" width="1" height="1" fill="#2f8fbd"/><rect x="33" y="17" width="1" height="1" fill="#2f8fbd"/><path d="M29.5 21 V33" stroke="#000" stroke-width="1.4"/><path d="M26 26 H33 L29.5 33Z" fill="#000"/><g stroke="#5a5a5a" stroke-width="1" fill="#c9c9c9"><rect x="6.2" y="35.3" width="5.1" height="12.1"/><rect x="19.6" y="35.3" width="20" height="12.1"/><rect x="39.6" y="37.3" width="6.1" height="8.2"/><rect x="11.3" y="32.3" width="8.3" height="18"/><path d="M4 41.3H9 M12 41.3H14 M16 41.3H23 M25 41.3H27 M29 41.3H38 M40 41.3H42 M44 41.3H47.7" fill="none" stroke-width="1"/></g></svg>
<svg class="s" style="left:545px;top:930px;" width="50" height="55" viewBox="0 0 50 55"><rect x="21.7" y="5.7" width="16.4" height="23.3" fill="#6ec1de" stroke="#2f95c0" stroke-width="1"/><rect x="25" y="7" width="1" height="1" fill="#2f8fbd"/><rect x="29" y="10" width="1" height="1" fill="#2f8fbd"/><rect x="35" y="11" width="1" height="1" fill="#2f8fbd"/><rect x="24" y="14" width="1" height="1" fill="#2f8fbd"/><rect x="32" y="15" width="1" height="1" fill="#2f8fbd"/><rect x="28" y="19" width="1" height="1" fill="#2f8fbd"/><rect x="27" y="24" width="1" height="1" fill="#2f8fbd"/><rect x="33" y="25" width="1" height="1" fill="#2f8fbd"/><g stroke="#5a5a5a" stroke-width="1" fill="#c9c9c9"><rect x="6.2" y="35.3" width="5.1" height="12.1"/><rect x="19.6" y="35.3" width="20" height="12.1"/><rect x="39.6" y="37.3" width="6.1" height="8.2"/><rect x="11.3" y="32.3" width="8.3" height="18"/><path d="M4 41.3H9 M12 41.3H14 M16 41.3H23 M25 41.3H27 M29 41.3H38 M40 41.3H42 M44 41.3H47.7" fill="none" stroke-width="1"/></g><circle cx="19.5" cy="41.5" r="4.3" fill="#fff" stroke="#000" stroke-width="1.2"/><path d="M19.5 41.5 V37.2 A4.3 4.3 0 0 0 15.2 41.5Z M19.5 41.5 V45.8 A4.3 4.3 0 0 0 23.8 41.5Z" fill="#000"/><path d="M14 41.5 H25 M19.5 36.5 V46.5" stroke="#000" stroke-width="1.3"/></svg>
<svg class="s" style="left:545px;top:84px;" width="50" height="55" viewBox="0 0 50 55"><path d="M18.4 9 V26" stroke="#000" stroke-width="1.4"/><path d="M18.4 5.9 L22 12.4 H14.8Z M18.4 29.9 L22 23.4 H14.8Z" fill="#000"/><path d="M26.5 6.2 V25.5 H33.5 V6.2 M33.5 20.4 H45.8" fill="none" stroke="#3a3f45" stroke-width="1.1"/><rect x="27.1" y="25.5" width="5.7" height="4.1" fill="#5ab5dc" stroke="#3aa3d3" stroke-width="0.6"/><g stroke="#5a5a5a" stroke-width="1" fill="#c9c9c9"><rect x="6.2" y="36.4" width="5.1" height="12.1"/><rect x="19.6" y="36.4" width="20" height="12.1"/><rect x="39.6" y="38.4" width="6.1" height="8.2"/><rect x="11.3" y="33.4" width="8.3" height="18"/><path d="M4 42.4H9 M12 42.4H14 M16 42.4H23 M25 42.4H27 M29 42.4H38 M40 42.4H42 M44 42.4H47.7" fill="none" stroke-width="1"/></g></svg>
<div class="b" style="left:1213px;top:202.7px;width:54px;height:54px;box-sizing:border-box;border-radius:50%;background:#fff;border:1px solid #d2d2d2;"></div>
<svg class="s" style="left:1220px;top:210px;" width="40" height="40" viewBox="0 0 40 40"><rect x="8.45" y="10.25" width="23.3" height="17.6" rx="2" fill="none" stroke="#1a1a1a" stroke-width="2.5"/><path d="M16 29 H24 L24.4 32 H27.9 V33.8 H12.1 V32 H15.6Z" fill="#1a1a1a"/><g transform="translate(13.7 24.6) rotate(-43)"><path d="M0 0 L4 -2 H16.5 Q17.5 0 16.5 2 H4Z" fill="#1a1a1a"/><path d="M1.3 -0.2 L4 -1.3 V1.3Z" fill="#fff"/><path d="M5.5 0 H13.5" stroke="#fff" stroke-width="0.9" stroke-dasharray="1.1 0.9"/><circle cx="15.2" cy="-0.3" r="0.6" fill="#fff"/></g></svg>
<div class="b" style="left:1202px;top:323px;width:76px;height:54px;box-sizing:border-box;border-radius:8px;background:#fff;border:1px solid #d2d2d2;"></div>
<svg class="s" style="left:1220px;top:325px;" width="40" height="50" viewBox="0 0 40 50"><path d="M6.2 15.1 A12.3 12.3 0 0 1 26.5 10.8" fill="none" stroke="#1a1a1a" stroke-width="1.3"/><path d="M29.7 15.6 L23.3 12.5 L28.7 8.3Z" fill="#1a1a1a"/><path d="M22.6 30.3 A11 11 0 0 1 10 27.8" fill="none" stroke="#1a1a1a" stroke-width="1.3"/><path d="M5 23.2 L6.7 30.8 L11.8 26.4Z" fill="#1a1a1a"/><rect x="27.5" y="18.3" width="5.1" height="3.9" fill="#fff" stroke="#333" stroke-width="1.1"/><rect x="26.3" y="22.2" width="6.5" height="16.4" fill="#fff" stroke="#333" stroke-width="1.1"/><rect x="27.2" y="38.6" width="4.7" height="3.1" fill="#3aa3d3"/></svg>
<div class="b" style="left:1213px;top:823px;width:54px;height:54px;box-sizing:border-box;border-radius:50%;background:#c8c8c8;border:1px solid #c8c8c8;"></div>
<svg class="s" style="left:1220px;top:831.5px;" width="40" height="40" viewBox="0 0 40 40"><path d="M15 22 Q9 16 11 10 Q14 4 20 4 Q26 4 29 10 Q31 16 25 22 V25 H15Z" fill="none" stroke="#111" stroke-width="2"/><path d="M15 27 H25 V32 Q25 36 20 36 Q15 36 15 32Z" fill="#111"/></svg>
<div class="b" style="left:1213px;top:883px;width:54px;height:54px;box-sizing:border-box;border-radius:50%;background:#fff;border:1px solid #d2d2d2;"></div>
<svg class="s" style="left:1220px;top:890px;" width="40" height="40" viewBox="0 0 40 40"><path d="M15 19.5 V7.5 Q15 4.9 18 4.9 Q21 4.9 21 7.5 V12.5 L27 14.2 Q30.5 15.3 30.5 19.5 Q30.5 23.5 28.6 28.8 M15 19.5 L10.5 18.2 Q7.3 18.3 7.4 20.5 Q7.8 22.3 10.8 23 Q13 23.8 18.2 28.8" fill="none" stroke="#111" stroke-width="1.9" stroke-linejoin="round"/><rect x="15.1" y="30.2" width="14.7" height="6.1" rx="0.6" fill="#111"/></svg>
<div class="b" style="left:1213px;top:943px;width:54px;height:54px;box-sizing:border-box;border-radius:50%;background:#fff;border:1px solid #d2d2d2;"></div>
<svg class="s" style="left:1220px;top:950px;" width="40" height="40" viewBox="0 0 40 40"><path d="M4.6 19.6 L20 6.4 L35.4 19.6" fill="none" stroke="#111" stroke-width="4" stroke-linecap="round"/><path d="M7.3 22 L20 9.9 L32.7 22 V36.6 H28.3 V23.4 H20 V36.6 H7.3Z" fill="#111"/><rect x="9.8" y="23.9" width="7.8" height="4.9" fill="#fff"/></svg>
</body></html>
